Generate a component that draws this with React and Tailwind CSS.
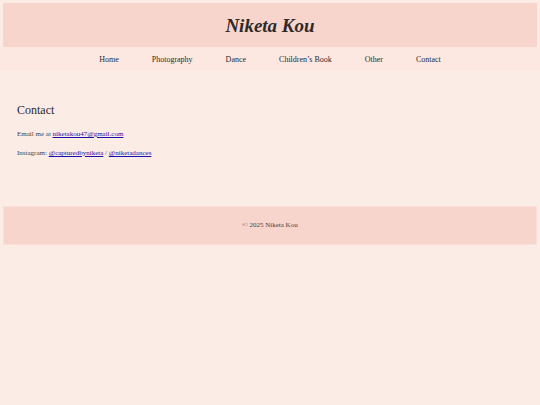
const links = ["Home", "Photography", "Dance", "Children’s Book", "Other", "Contact"];

const App = () => {
  return (
    <div
      className="min-h-screen bg-[#fbede6] text-[#333] pt-[3px]"
      style={{ fontFamily: '"Liberation Serif", "Times New Roman", serif' }}
    >
      <header className="mx-[3px] h-[44px] bg-[#f8d5cc] flex items-center justify-center">
        <h1 className="text-[19px] font-bold italic text-[#2e2a2a] leading-none">Niketa Kou</h1>
      </header>

      <nav className="h-[24px] bg-[#fde8e1] flex items-center justify-center gap-[33px]">
        {links.map((l) => (
          <a key={l} href="#" className="text-[8px] text-[#2a2a2a] leading-none pt-[1px]">
            {l}
          </a>
        ))}
      </nav>

      <main className="px-[17px] pt-[32px] pb-[48px]">
        <h2 className="text-[12px] leading-[14px] text-[#2e2a2a]">Contact</h2>
        <p className="mt-[12px] text-[7px] leading-[10px] text-[#444]">
          Email me at{" "}
          <a href="#" className="text-[#1a0dab] underline">
            niketakou47@gmail.com
          </a>
        </p>
        <p className="mt-[9px] text-[7px] leading-[10px] text-[#444]">
          Instagram:{" "}
          <a href="#" className="text-[#1a0dab] underline">
            @capturedbyniketa
          </a>{" "}
          /{" "}
          <a href="#" className="text-[#1a0dab] underline">
            @niketadances
          </a>
        </p>
      </main>

      <footer className="mx-[3px] h-[39px] bg-[#f8d5cc] border border-[#fae0d8] flex items-center justify-center">
        <p className="text-[7px] text-[#444] leading-none">© 2025 Niketa Kou</p>
      </footer>
    </div>
  );
};

export default App;
